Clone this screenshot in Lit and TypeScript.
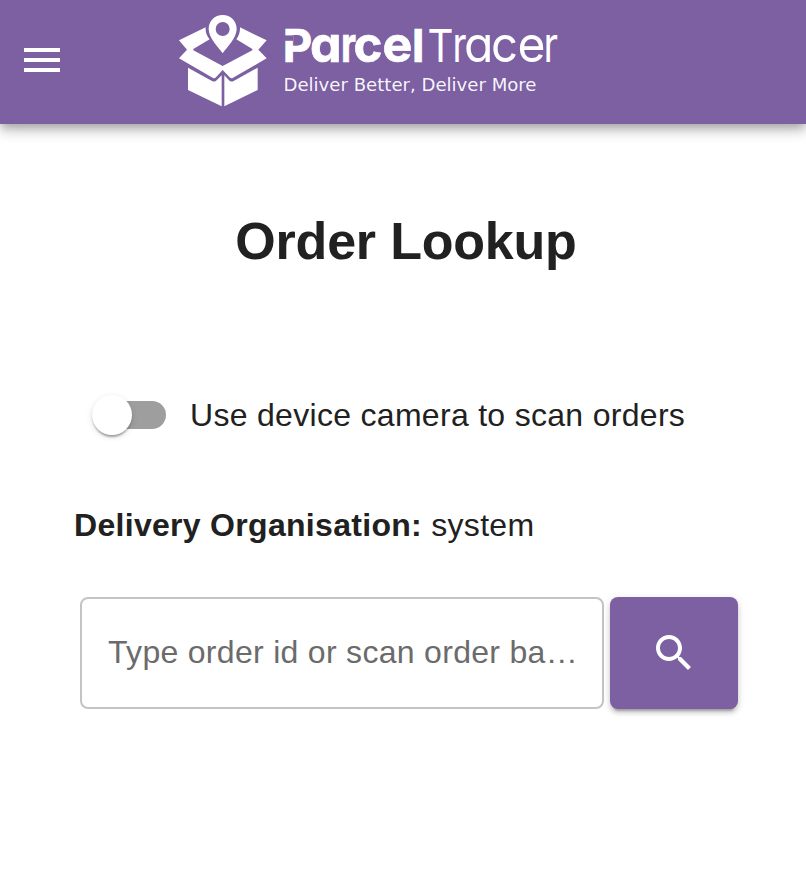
import { LitElement, html, css } from "lit";
import { customElement } from "lit/decorators.js";

@customElement("app-logo")
class AppLogo extends LitElement {
  static styles = css`
    :host { display: block; width: 400px; height: 110px; letter-spacing: 0; }
    svg { display: block; }
    .name { font-family: Inter, "Liberation Sans", sans-serif; font-feature-settings: "cv11"; fill: #fff; }
    .bold { font-weight: 700; stroke: #fff; stroke-width: 0.7px; }
    .light { font-weight: 400; }
    .cap { font-size: 45.6px; }
    .low { font-size: 50px; }
    .notch { fill: #7c60a2; }
    .tag { font-family: "DejaVu Sans", sans-serif; font-size: 18.4px; fill: #fff; fill-opacity: 0.95; }
  `;
  render() {
    return html`<svg width="400" height="110" viewBox="170 5 400 110">
      <g transform="translate(170 5) scale(.33333)" fill="#fff">
        <path fill-rule="evenodd" d="M158 30c24 0 42 18 42 42 0 27-29 54-42 73-13-19-42-46-42-73 0-24 18-42 42-42zm0 21a21 21 0 1 0 0 42a21 21 0 0 0 0-42z" />
        <path d="M27 106L107 67Q105 87 119 103L70 132V136L158 183L247 136V132L199 103Q211 87 210 67L290 106L265 134L290 160L188 219Q184 221 179 217L158 195L138 217Q134 221 129 219L27 160L51 134z" />
        <path d="M54 188L126 228Q134 232 140 226L155 211V304L54 255zM263 188L191 228Q183 232 177 226L163 211V304L263 255z" />
      </g>
      <text class="name bold" y="61.7"><tspan class="cap" x="282.8" textLength="29.5" lengthAdjust="spacingAndGlyphs">P</tspan><tspan class="low" x="310">a</tspan><tspan class="low" x="341" textLength="15" lengthAdjust="spacingAndGlyphs">r</tspan><tspan class="low" x="353.5" textLength="29" lengthAdjust="spacingAndGlyphs">c</tspan><tspan class="low" x="382.5">e</tspan><tspan class="cap" x="412">l</tspan></text>
      <rect class="notch" x="284" y="35.4" width="9" height="5.4" />
      <text class="name light" y="61.7"><tspan class="cap" x="427.5" textLength="26" lengthAdjust="spacingAndGlyphs">T</tspan><tspan class="low" x="452.5" textLength="14" lengthAdjust="spacingAndGlyphs">r</tspan><tspan class="low" x="464" textLength="29.5" lengthAdjust="spacingAndGlyphs">a</tspan><tspan class="low" x="491" textLength="27" lengthAdjust="spacingAndGlyphs">c</tspan><tspan class="low" x="517.5" textLength="28" lengthAdjust="spacingAndGlyphs">e</tspan><tspan class="low" x="543.5" textLength="14.5" lengthAdjust="spacingAndGlyphs">r</tspan></text>
      <text class="tag" x="283.5" y="91" textLength="253" lengthAdjust="spacingAndGlyphs">Deliver Better, Deliver More</text>
    </svg>`;
  }
}

@customElement("app-root")
class AppRoot extends LitElement {
  static styles = css`
    :host {
      display: block; min-height: 886px; background: #fff; color: #212121;
      font-family: "Liberation Sans", Arial, sans-serif; font-size: 32px; letter-spacing: 0.3px;
    }
    * { box-sizing: border-box; }
    header {
      height: 124px; background: #7c60a2; display: flex; align-items: flex-start; padding: 5px 0 0 18px;
      box-shadow: 0 4px 8px -2px rgba(0,0,0,.2), 0 8px 10px rgba(0,0,0,.14), 0 2px 20px rgba(0,0,0,.12);
    }
    .menu { width: 48px; height: 48px; margin: 31px 104px 0 0; fill: #fff; }
    main { padding: 87px 68px 0 74px; }
    h1 { margin: 0; text-align: center; font-size: 52px; line-height: 60px; letter-spacing: -0.2px; }
    .toggle { display: flex; align-items: center; height: 48px; margin-top: 120px; padding-left: 18px; }
    .track { display: flex; align-items: center; width: 74px; height: 28px; margin-right: 24px; border-radius: 14px; background: linear-gradient(#9e9e9e, #9e9e9e) right / 60px 28px no-repeat; }
    .thumb {
      width: 40px; height: 40px; border-radius: 50%; background: #fff;
      box-shadow: 0 4px 2px -2px rgba(0,0,0,.2), 0 2px 2px rgba(0,0,0,.14), 0 2px 6px rgba(0,0,0,.12);
    }
    .org { margin: 66px 0 0; line-height: 40px; }
    .search { display: flex; gap: 6px; margin: 52px 0 0 6px; }
    .field { width: 524px; height: 112px; border: 2px solid #c4c4c4; border-radius: 8px; padding: 0 24px 2px 26px; display: flex; align-items: center; color: #6b6b6b; }
    .placeholder { overflow: hidden; white-space: nowrap; text-overflow: ellipsis; }
    button {
      display: flex; align-items: center; justify-content: center; width: 128px; height: 112px; padding: 0;
      border: 0; border-radius: 8px; background: #7c60a2;
      box-shadow: 0 6px 2px -4px rgba(0,0,0,.2), 0 4px 4px rgba(0,0,0,.14), 0 2px 10px rgba(0,0,0,.12);
    }
    button svg { fill: #fff; }
  `;
  render() {
    return html`
      <header>
        <svg class="menu" viewBox="0 0 24 24"><path d="M3 18h18v-2H3v2zm0-5h18v-2H3v2zm0-7v2h18V6H3z" /></svg>
        <app-logo></app-logo>
      </header>
      <main>
        <h1>Order Lookup</h1>
        <div class="toggle"><span class="track"><span class="thumb"></span></span><span>Use device camera to scan orders</span></div>
        <p class="org"><b>Delivery Organisation:</b> system</p>
        <div class="search">
          <div class="field"><span class="placeholder">Type order id or scan order barcode</span></div>
          <button aria-label="Search"><svg width="48" height="48" viewBox="0 0 24 24"><path d="M15.5 14h-.79l-.28-.27C15.41 12.59 16 11.11 16 9.5 16 5.91 13.09 3 9.5 3S3 5.91 3 9.5 5.91 16 9.5 16c1.61 0 3.09-.59 4.23-1.57l.27.28v.79l5 4.99L20.49 19l-4.99-5zm-6 0C7.01 14 5 11.99 5 9.5S7.01 5 9.5 5 14 7.01 14 9.5 11.99 14 9.5 14z" /></svg></button>
        </div>
      </main>`;
  }
}
